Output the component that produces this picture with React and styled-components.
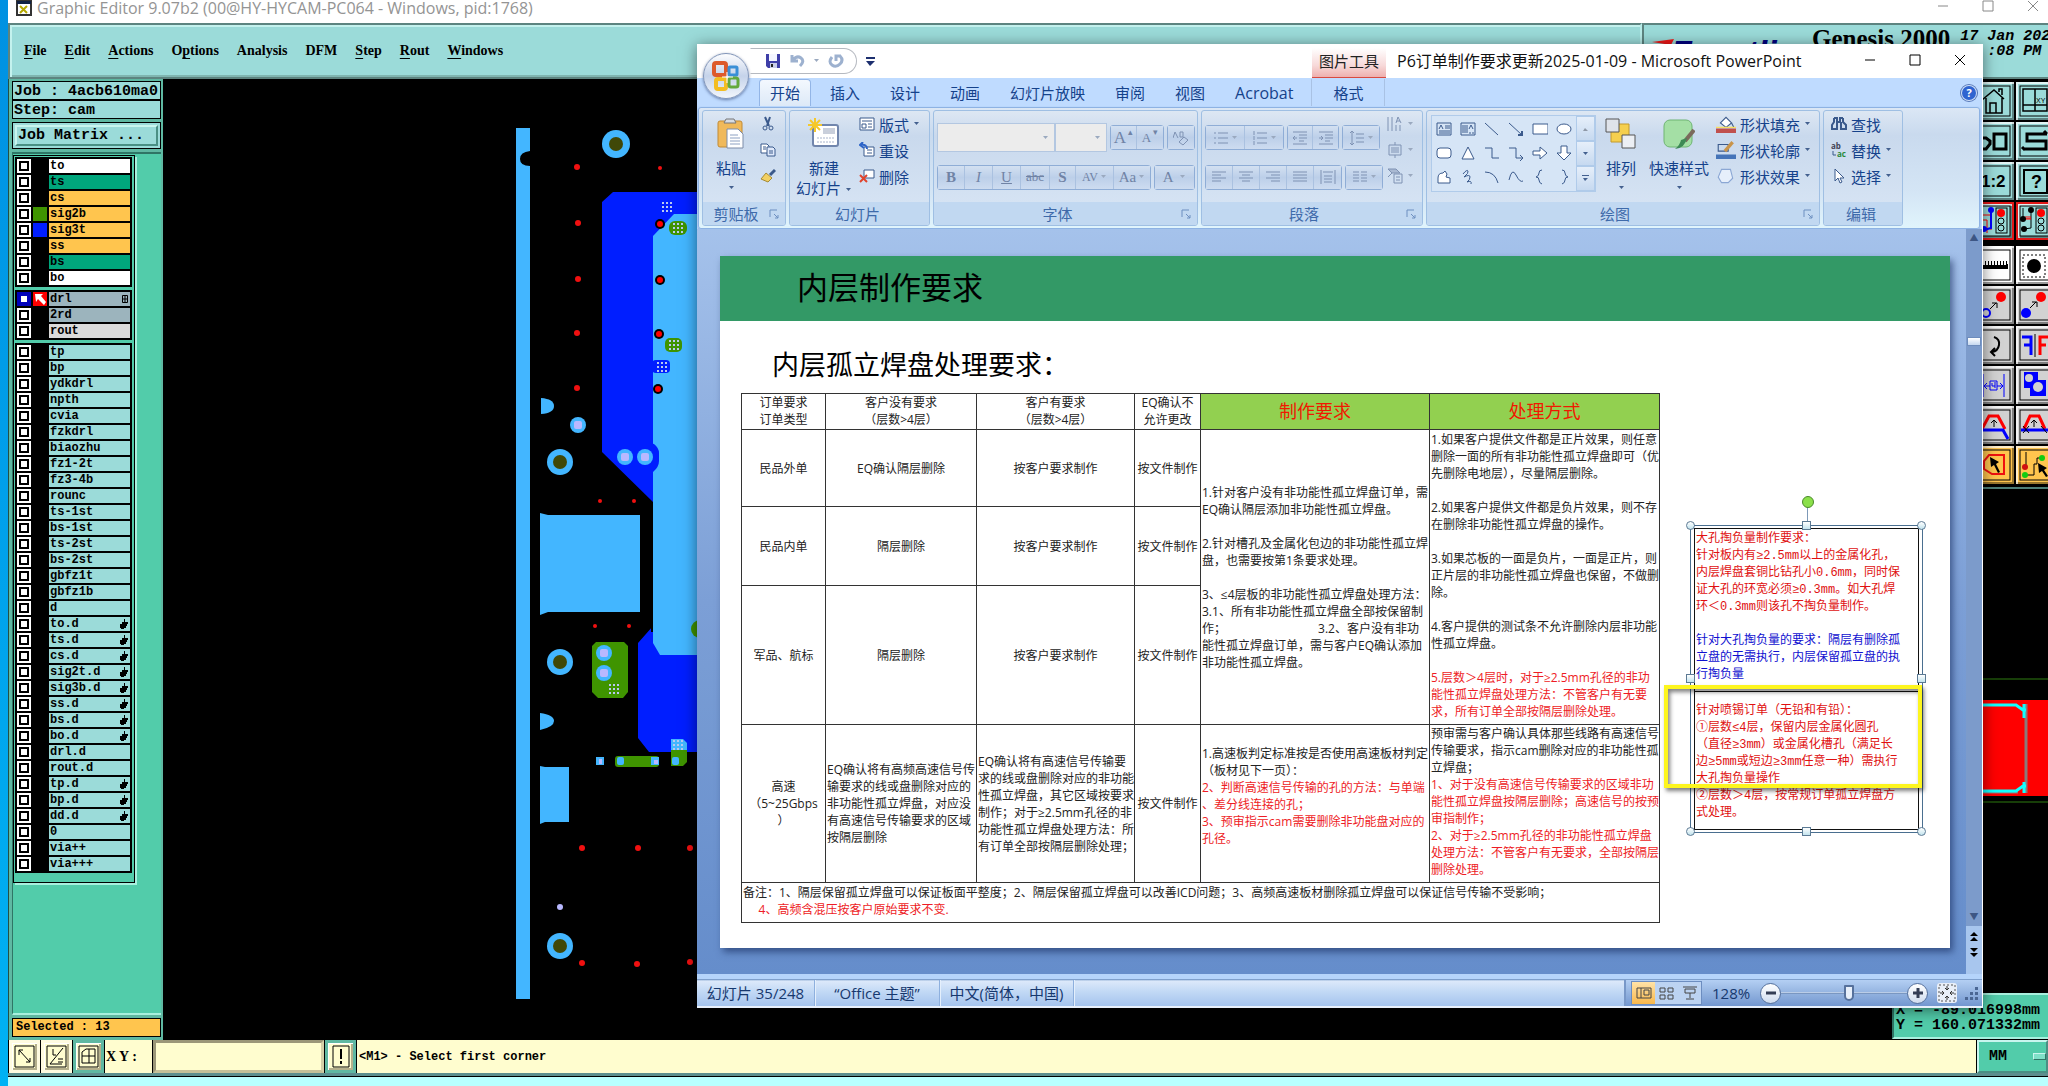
import React from 'react';
import styled, { createGlobalStyle, css } from 'styled-components';

const aqua = '#9bdbd9';
const mint = '#52ccaa';
const amber = '#ffc54e';
const cream = '#fffdcf';
const navy = '#15428b';
const copper = '#43b6ff';
const sigBlue = '#001eff';
const sigGreen = '#3f9400';

const menus = [
  ['', 'F', 'ile'],
  ['', 'E', 'dit'],
  ['', 'A', 'ctions'],
  ['O', 'p', 'tions'],
  ['Analysis', '', ''],
  ['DFM', '', ''],
  ['', 'S', 'tep'],
  ['', 'R', 'out'],
  ['', 'W', 'indows']
];

const layerGroups = [
  [
    { name: 'to', color: '#fff' },
    { name: 'ts', color: '#00a67c' },
    { name: 'cs', color: amber },
    { name: 'sig2b', color: amber, swatch: sigGreen },
    { name: 'sig3t', color: amber, swatch: sigBlue },
    { name: 'ss', color: amber },
    { name: 'bs', color: '#00a67c' },
    { name: 'bo', color: '#fff' }
  ],
  [
    { name: 'drl', color: '#9cb4bd', swatch: '#f00', active: true },
    { name: '2rd', color: '#9cb4bd' },
    { name: 'rout', color: '#dadada' }
  ],
  [
    'tp', 'bp', 'ydkdrl', 'npth', 'cvia', 'fzkdrl', 'biaozhu', 'fz1-2t', 'fz3-4b',
    'rounc', 'ts-1st', 'bs-1st', 'ts-2st', 'bs-2st', 'gbfz1t', 'gbfz1b', 'd',
    'to.d*', 'ts.d*', 'cs.d*', 'sig2t.d*', 'sig3b.d*', 'ss.d*', 'bs.d*', 'bo.d*',
    'drl.d', 'rout.d', 'tp.d*', 'bp.d*', 'dd.d*', '0', 'via++', 'via+++'
  ].map((n) => ({ name: n.replace('*', ''), color: aqua, hand: n.endsWith('*') }))
];

const HandIcon = () => (
  <svg width="8" height="10" viewBox="0 0 8 10">
    <path d="M4 0h1v3h3v2H7v2H6v2H4v1H1V9H0V5h2V3h2z" fill="#000" />
  </svg>
);

const Layer = ({ layer }) => (
  <LayerRow>
    <input type="checkbox" defaultChecked={layer.active} />
    <Swatch $color={layer.swatch}>
      {layer.active && (
        <svg width="14" height="14" viewBox="0 0 14 14">
          <path d="M2 2h8L8 4l5 6-2 3-6-6-2 3z" fill="#fff" />
        </svg>
      )}
    </Swatch>
    <LayerName $color={layer.color}>
      <span>{layer.name}</span>
      {layer.hand && <HandIcon />}
      {layer.active && (
        <svg width="6" height="8" viewBox="0 0 6 8">
          <path d="M.5.5h5v7h-5zM3 0v8M0 4h6" fill="none" stroke="#000" />
        </svg>
      )}
    </LayerName>
  </LayerRow>
);

const Pad = ({ x, y, r = 13 }) => (
  <>
    <circle cx={x} cy={y} r={r} fill={copper} />
    <circle cx={x} cy={y} r="7" fill="#404808" />
  </>
);

const Via = ({ x, y }) => (
  <>
    <circle cx={x} cy={y} r="8" fill={copper} />
    <rect x={x - 4} y={y - 4} width="8" height="8" rx="2" fill="#b8b8ff" />
  </>
);

const Dots = ({ x, y }) => (
  <path
    d={`M${x} ${y}h10M${x} ${y + 4}h10M${x} ${y + 8}h10`}
    stroke="#b9c9f0"
    strokeWidth="2"
    strokeDasharray="2 2"
  />
);

const redDots = [
  [577, 167, 3], [660, 168, 2], [578, 223, 3], [578, 279, 3], [577, 333, 3],
  [577, 388, 3], [600, 501, 2], [634, 501, 2], [595, 626, 2], [629, 626, 2],
  [582, 848, 3], [638, 848, 3], [690, 848, 3], [582, 963, 3], [637, 964, 3], [690, 962, 3]
];

const Board = () => (
  <BoardArt width="540" height="960" viewBox="163 79 540 960">
    <path d={'M516 128h14v23q-10 1-10 8t10 7v833h-14z'} fill={copper} />
    <path d="M602 202l11-10h90v560H649l-11-14v-95l15-17V502L602 452z" fill={sigBlue} />
    <path d="M653 502v130h-2V502z" />
    <path d="M653 236l21-22h29v441h-43l-7-12z" fill={copper} />
    <path d="M650 443l4 1q5 4 5 9v8q0 6-6 11h-3z" fill={sigBlue} />
    <Dots x={662} y={203} />
    <rect x="669" y="221" width="18" height="14" rx="6" fill={sigGreen} />
    <Dots x={673} y={224} />
    <rect x="665" y="338" width="17" height="14" rx="5" fill={sigGreen} />
    <Dots x={669} y={341} />
    <rect x="652" y="360" width="18" height="13" rx="4" fill={sigBlue} />
    <Dots x={657} y={363} />
    <circle cx="700" cy="629" r="9" fill={sigGreen} />
    {[[660, 224], [660, 280], [659, 334], [658, 389]].map(([x, y]) => (
      <g key={y}>
        <circle cx={x} cy={y} r="5" fill="#000" />
        <circle cx={x} cy={y} r="3" fill="#f00" />
      </g>
    ))}
    {redDots.map(([x, y, r]) => (
      <circle key={`${x}-${y}`} cx={x} cy={y} r={r} fill="#f01010" />
    ))}
    <Pad x={616} y={144} r={14} />
    <Pad x={560} y={462} />
    <Pad x={560} y={662} />
    <Pad x={560} y={946} />
    <path d="M541 398q13 1 13 8t-13 8z" fill={copper} />
    <path d="M540 713q14 2 14 8t-14 9z" fill={copper} />
    <Via x={578} y={425} />
    <Via x={625} y={457} />
    <Via x={645} y={457} />
    <path d="M540 513l8 2h92v97h-92l-8 3z" fill={copper} />
    <path d="M596 642h28l4 4v46l-5 6h-25l-6-6v-46z" fill={sigGreen} />
    <Via x={604} y={653} />
    <Via x={604} y={673} />
    <Dots x={609} y={685} />
    <rect x="596" y="757" width="8" height="8" fill={copper} />
    <rect x="599" y="759" width="3" height="5" fill="#b8b8ff" />
    <rect x="615" y="756" width="44" height="11" rx="3" fill={sigGreen} />
    <rect x="617" y="757" width="7" height="8" rx="2" fill={copper} />
    <rect x="651" y="757" width="8" height="8" fill={copper} />
    <rect x="654" y="760" width="4" height="4" fill="#b8b8ff" />
    <path d="M671 748h16v14l-4 4h-12z" fill={sigGreen} />
    <path d="M671 750v-11h12l4 4v7z" fill={copper} />
    <Dots x={673} y={741} />
    <rect x="672" y="757" width="7" height="8" rx="2" fill={copper} />
    <path d="M540 766l5 1h24v55h-24l-5 2z" fill={copper} />
    <circle cx="560" cy="907" r="3" fill="#b8b8ff" />
  </BoardArt>
);

const LightPost = () => (
  <>
    <rect x="20" y="6" width="11" height="25" fill="none" stroke="#000" />
    <circle cx="25" cy="11" r="4" fill="#f00" />
    <circle cx="25" cy="19" r="3" fill="none" stroke="#000" />
    <circle cx="25" cy="26" r="3" fill="none" stroke="#000" />
  </>
);

const tools = [
  { name: 'home', art: <path d="M6 18L18 8l10 9M10 16v15h16V16M14 31V21h6v10M23 10V7h3v6" fill="none" stroke="#000" strokeWidth="1.5" /> },
  {
    name: 'views',
    art: (
      <>
        <path d="M7 7h24v22H7zM19 7v22M7 23h24" fill="none" stroke="#000" strokeWidth="1.5" />
        <text x="20" y="21" fontSize="7" fontFamily="Liberation Sans">XY</text>
      </>
    )
  },
  { name: 'copy', art: <path d="M18 12h12v15H18zM4 12v15h6l4-5v-3l-4-3H4" fill="none" stroke="#000" strokeWidth="3" /> },
  { name: 'snake', art: <path d="M31 12H11v7h19v8H8M28 9l3 3M6 25l3 3" fill="none" stroke="#000" strokeWidth="3" /> },
  { name: 'ratio', art: <text x="5" y="25" fontSize="17" fontWeight="700" fontFamily="Liberation Sans">1:2</text> },
  {
    name: 'help',
    art: (
      <>
        <rect x="8" y="8" width="23" height="23" fill="none" stroke="#000" strokeWidth="2" />
        <text x="15" y="26" fontSize="18" fontWeight="700" fontFamily="Liberation Sans">?</text>
      </>
    )
  },
  {
    name: 'drc-left', hot: true,
    art: (
      <>
        <path d="M6 13h9v15M6 18h5v13" fill="none" stroke="#f00" />
        <path d="M15 8v18l-7 2" fill="none" stroke="#00f" strokeWidth="2" />
        <circle cx="15" cy="8" r="3" fill="#00f" />
        <circle cx="8" cy="27" r="3" fill="#00f" />
        <LightPost />
      </>
    )
  },
  {
    name: 'drc-right', hot: true,
    art: (
      <>
        <path d="M7 6v10M15 8v18l-7 1" fill="none" stroke="#000" />
        <path d="M9 17h6M10 14v3M12 14v3M14 14v3" stroke="#f00" />
        <circle cx="15" cy="8" r="3" />
        <circle cx="7" cy="17" r="3" />
        <circle cx="8" cy="27" r="3" />
        <LightPost />
      </>
    )
  },
  { name: 'ruler', tone: '#fff', art: <path d="M5 23h27v-5h-1v-3h-1v4h-2v-4h-1v4h-2v-4h-1v4h-2v-4h-1v4h-2v-4h-1v4h-2v-4h-1v4h-2v-4h-1v4h-2v-4h-1v4H5z" /> },
  {
    name: 'spot', tone: '#fff',
    art: (
      <>
        <rect x="7" y="9" width="22" height="22" fill="none" stroke="#000" strokeDasharray="2 2" />
        <circle cx="18" cy="20" r="7" />
      </>
    )
  },
  {
    name: 'move-ring', tone: '#d2d2d2',
    art: (
      <>
        <circle cx="10" cy="27" r="4" fill="none" stroke="#00f" strokeWidth="2" />
        <circle cx="25" cy="11" r="5" fill="#f00" />
        <path d="M14 23l6-6M16 17h5v5" fill="none" stroke="#000" />
      </>
    )
  },
  {
    name: 'move-dot', tone: '#d2d2d2',
    art: (
      <>
        <circle cx="10" cy="27" r="5" fill="#00f" />
        <circle cx="25" cy="11" r="5" fill="#f00" />
        <path d="M14 22l6-6M16 16h5v5" fill="none" stroke="#000" />
      </>
    )
  },
  { name: 'rotate', tone: '#d2d2d2', art: <path d="M18 11q6 2 5 8t-7 7M19 22l-4 4 4 4" fill="none" stroke="#000" strokeWidth="2" /> },
  {
    name: 'mirror', tone: '#d2d2d2',
    art: (
      <>
        <path d="M6 11h9v18M8 19h7" fill="none" stroke="#00f" strokeWidth="3" />
        <path d="M19 8v23" stroke="#000" />
        <path d="M32 11h-8v18M24 19h6" fill="none" stroke="#f00" strokeWidth="3" />
      </>
    )
  },
  { name: 'stretch', tone: '#d2d2d2', art: <path d="M7 8v23M28 8v23M8 20h6M21 20h6M11 17l-3 3 3 3M24 17l3 3-3 3M14 15h7v9h-7zM16 17v3h3M19 16v6" fill="none" stroke="#00f" /> },
  {
    name: 'merge', tone: '#d2d2d2',
    art: (
      <>
        <path d="M8 6h14v8h8v16H14v-8H8z" fill="#00f" />
        <circle cx="13" cy="12" r="4" fill="#d2d2d2" />
        <circle cx="22" cy="21" r="5" fill="#d2d2d2" />
      </>
    )
  },
  {
    name: 'arc-cut', tone: '#d2d2d2',
    art: (
      <>
        <path d="M6 23l7-13h9l7 13" fill="none" stroke="#f00" strokeWidth="3" />
        <path d="M4 24h23l5 9" fill="none" stroke="#00f" strokeWidth="3" />
        <path d="M18 21v-7M15 17l3-3 3 3" fill="none" stroke="#000" />
      </>
    )
  },
  {
    name: 'arc-break', tone: '#d2d2d2',
    art: (
      <>
        <path d="M8 23l6-13h9l6 13" fill="none" stroke="#f00" strokeWidth="3" />
        <path d="M5 24h29" stroke="#00f" strokeWidth="3" />
        <path d="M18 21v-7M15 17l3-3 3 3M7 20l6 7M13 20l-6 7M25 20l6 7" fill="none" stroke="#000" />
      </>
    )
  },
  {
    name: 'pick-area', tone: amber,
    art: (
      <>
        <path d="M13 9h15v19h-12l-8-5v-8z" fill="none" stroke="#f01010" strokeWidth="2" />
        <path d="M14 11l9 5-3 2 4 8-2 1-4-8-3 2z" />
      </>
    )
  },
  {
    name: 'pick-net', tone: amber,
    art: (
      <>
        <path d="M10 6v15M9 29h9V18h3v-6h5" fill="none" stroke="#000" />
        <circle cx="9" cy="21" r="3" fill="#d01010" />
        <circle cx="9" cy="29" r="3" fill="#1c1" />
        <circle cx="26" cy="12" r="3" fill="#1c1" />
        <path d="M22 17l9 5-3 2 4 6-2 1-4-6-3 2z" />
      </>
    )
  }
];

const Overview = () => (
  <BoardArt width="72" height="470" viewBox="1976 489 72 470">
    <path d="M1976 679h72M1976 802h72" stroke="#2f7d10" />
    <rect x="1976" y="700" width="72" height="96" fill="#f00" />
    <path d="M2026 704v89M1976 792h42" stroke="#8a7a7a" strokeWidth="3" />
    <path d="M1976 705h40l7 5h3M1976 791h40l7-5h3M2024 704v14M2024 782v11" stroke="#1ff" strokeWidth="3" fill="none" />
  </BoardArt>
);

const Caret = ({ dim }) => (
  <svg width="7" height="4" viewBox="0 0 7 4">
    <path d="M1 0h5L3.500 3z" fill={dim ? '#9aa9bf' : '#43608f'} />
  </svg>
);

const Doc = ({ size = 16, children, dim }) => (
  <svg width={size} height={size} viewBox="0 0 16 16" fill="none" stroke={dim ? '#7f92b3' : '#3b5a8c'}>
    {children}
  </svg>
);

const smallClipboard = [
  ['剪切', <><path d="M5 1l4 9M10 1L7 10" strokeWidth="2" /><circle cx="5" cy="12" r="2" /><circle cx="11" cy="12" r="2" /></>],
  ['复制', <><path d="M1 2h6l2 2v7H1z" fill="#fff" /><path d="M7 5h6l2 2v7H7z" fill="#dfe9fb" /><path d="M9 9h4M9 11h4M3 5h3M3 7h3" /></>],
  ['格式刷', <><path d="M15 2l-5 5" strokeWidth="3" /><path d="M6 5l6 5-4 4-7-3z" fill="#f2d063" stroke="#a58a35" /></>]
];

const slideActions = [
  ['版式', true, <><path d="M1 2h14v12H1z" fill="#fff" /><path d="M3 5h10M3 8h4v4H3zM9 8h4M9 11h4" /></>],
  ['重设', false, <><path d="M5 5h10v9H5z" fill="#fff" /><path d="M8 8h5M8 11h5" /><path d="M8 7Q8 2 2 3M4 0L1 3l4 3" stroke="#2d64c8" strokeWidth="2" /></>],
  ['删除', false, <><path d="M5 2h10v8H5z" fill="#fff" /><path d="M1 7l7 7M8 7l-7 7" stroke="#e0442c" strokeWidth="2" /></>]
];

const gallery = [
  <><path d="M1 2h14v12H1z" /><path d="M9 5h5M9 7h5M3 10h11M3 12h11" /><path d="M3 8l2-4 2 4" /></>,
  <><path d="M1 2h14v12H1z" /><path d="M3 4v8M5 4v8M7 4v8M10 11v2M13 11v2M9 8l2-4 2 4" /></>,
  <path d="M1 2l13 12" />,
  <><path d="M1 2l13 12" /><path d="M14 10v4h-4" strokeWidth="2" /></>,
  <path d="M1 3h15v10H1z" fill="#fff" />,
  <ellipse cx="8" cy="8" rx="7" ry="5" fill="#fff" />,
  <rect x="1" y="3" width="14" height="10" rx="3" fill="#fff" />,
  <path d="M8 2l6 12H2z" fill="#fff" />,
  <path d="M1 3h7v10h7" />,
  <path d="M1 3h7v10h7M12 10l3 3-3 3" />,
  <path d="M1 6h7V2l7 6-7 6v-4H1z" fill="#fff" />,
  <path d="M5 1h6v7h4l-7 7-7-7h4z" fill="#fff" />,
  <path d="M2 9q0-5 5-5l2-2 2 3-1 3 4 1v5H2z" fill="#fff" />,
  <path d="M3 5q4-5 5-3t-4 6q6-3 6 0t-3 5q5-2 4 2" />,
  <path d="M1 3q10 0 13 11" />,
  <path d="M1 11Q4-2 8 6t7 6" />,
  <path d="M10 1Q7 1 7 4t-3 4q3 0 3 3t3 4" />,
  <path d="M6 1q3 0 3 3t3 4q-3 0-3 3t-3 4" />
];

const shapeActions = [
  ['形状填充', <><path d="M4 7l5-5 5 5-5 4z" fill="#fff" /><path d="M14 7l2 4" /><path d="M0 14h18" stroke="#c0504d" strokeWidth="4" /><path d="M0 11h18" stroke="#f7e064" /></>],
  ['形状轮廓', <><path d="M2 3h9v6H2z" /><path d="M15 1L8 9" stroke="#c9944a" strokeWidth="3" /><path d="M0 14h18" stroke="#4574b8" strokeWidth="4" /></>],
  ['形状效果', <path d="M5 2h8l2 8-4 4H5l-3-5z" fill="#e6effb" stroke="#8ba7d4" />]
];

const editActions = [
  ['查找', false, <path d="M3 2v4L1 9v4h5V6M12 2v4l3 3v4h-5V6M6 6h4M3 2h3v4M12 2H9v4" strokeWidth="2" />],
  ['替换', true, <><text x="0" y="7" fontSize="8" fontWeight="700" fill="#445" stroke="none">ab</text><text x="6" y="15" fontSize="8" fontWeight="700" fill="#2a8a3c" stroke="none">ac</text><path d="M2 9v4h3" /></>],
  ['选择', true, <path d="M4 1v12l3-3 2 5 2-1-2-4h4z" fill="#fff" />]
];

const alignLines = [
  'M1 3h14M1 6h9M1 9h14M1 12h9',
  'M1 3h14M4 6h8M1 9h14M4 12h8',
  'M1 3h14M6 6h9M1 9h14M6 12h9',
  'M1 3h14M1 6h14M1 9h14M1 12h14',
  'M1 1v14M15 1v14M3 3h10M4 7h8M4 10h8M4 13h8'
];

const Launcher = () => (
  <LaunchButton aria-label="更多">
    <svg width="10" height="10" viewBox="0 0 10 10">
      <path d="M1 8V1h7M5 5l4 4M9 6v3H6" fill="none" stroke="#6d8fc0" />
    </svg>
  </LaunchButton>
);

const Group = ({ title, width, launcher, children }) => (
  <GroupBox $width={width}>
    <GroupBody>{children}</GroupBody>
    <GroupLabel>
      <span>{title}</span>
      {launcher && <Launcher />}
    </GroupLabel>
  </GroupBox>
);

const Ribbon = () => (
  <RibbonBar>
    <Group title="剪贴板" width={84} launcher>
      <BigButton $width={50}>
        <svg width="30" height="32" viewBox="0 0 30 32">
          <rect x="2" y="3" width="24" height="26" rx="2" fill="#f0b95a" stroke="#c18a35" />
          <path d="M8 5h12l-2-4h-8z" fill="#d7dce4" stroke="#777" />
          <path d="M11 11h11l5 5v14H11z" fill="#fff" stroke="#7d8ca8" />
          <path d="M14 17h8M14 20h10M14 23h10M14 26h10" stroke="#8da1c2" />
        </svg>
        <span>粘贴</span>
        <Caret />
      </BigButton>
      <Stack>
        {smallClipboard.map(([name, art]) => (
          <SmallButton key={name} aria-label={name}>
            <Doc>{art}</Doc>
          </SmallButton>
        ))}
      </Stack>
    </Group>
    <Group title="幻灯片" width={141}>
      <BigButton $width={62}>
        <svg width="32" height="32" viewBox="0 0 32 32">
          <rect x="5" y="7" width="25" height="21" rx="2" fill="#fff" stroke="#7186ad" strokeWidth="2" />
          <path d="M15 10h12v6H15z" fill="#c9cfdb" />
          <path d="M9 20h18M9 24h18" stroke="#a8b4cc" strokeDasharray="2 1" />
          <path d="M7 0v14M0 7h14M2 2l10 10M12 2L2 12" stroke="#f5c82a" strokeWidth="2" />
        </svg>
        <span>新建</span>
        <span>幻灯片 <Caret /></span>
      </BigButton>
      <Stack>
        {slideActions.map(([name, caret, art]) => (
          <SmallButton key={name}>
            <Doc>{art}</Doc>
            {name}
            {caret && <Caret />}
          </SmallButton>
        ))}
      </Stack>
    </Group>
    <Group title="字体" width={265} launcher>
      <Rows>
        <ToolRow $height={29}>
          <Combos>
            <Combo $width={118}><select disabled aria-label="字体" /><Caret dim /></Combo>
            <Combo $width={52}><select disabled aria-label="字号" /><Caret dim /></Combo>
          </Combos>
          <ButtonSet>
            <FontButton $width={26} $size={17}>A<sup>▴</sup></FontButton>
            <FontButton $width={26} $size={13}>A<sup>▾</sup></FontButton>
          </ButtonSet>
          <ButtonSet>
            <FontButton $width={26} aria-label="清除格式">
              <Doc dim><path d="M0 8l2-6 3 6M7 2h3v5H7zM6 12l5-5 4 3-5 5z" /></Doc>
            </FontButton>
          </ButtonSet>
        </ToolRow>
        <ToolRow $height={26}>
          <ButtonSet>
            <FontButton $width={27}><b>B</b></FontButton>
            <FontButton $width={28}><i>I</i></FontButton>
            <FontButton $width={28}><u>U</u></FontButton>
            <FontButton $width={29} $size={13}><s>abc</s></FontButton>
            <FontButton $width={26}><b>S</b></FontButton>
            <FontButton $width={38} $size={12}>AV <Caret dim /></FontButton>
            <FontButton $width={36}>Aa <Caret dim /></FontButton>
          </ButtonSet>
          <ButtonSet>
            <FontButton $width={39}>A&nbsp; <Caret dim /></FontButton>
          </ButtonSet>
        </ToolRow>
      </Rows>
    </Group>
    <Group title="段落" width={222} launcher>
      <Rows>
        <ToolRow $height={29}>
          <ButtonSet>
            <FontButton $width={39} aria-label="项目符号"><Doc dim><path d="M5 3h10M5 8h10M5 13h10M1 3h2M1 8h2M1 13h2" /></Doc><Caret dim /></FontButton>
            <FontButton $width={38} aria-label="编号"><Doc dim><path d="M5 3h10M5 8h10M5 13h10M2 1v4M2 6v4M2 11v4" /></Doc><Caret dim /></FontButton>
          </ButtonSet>
          <ButtonSet>
            <FontButton $width={25} aria-label="减少缩进"><Doc dim><path d="M1 2h14M7 5h8M7 8h8M7 11h5M1 14h14M5 8H1M3 6L1 8l2 2" /></Doc></FontButton>
            <FontButton $width={25} aria-label="增加缩进"><Doc dim><path d="M1 2h14M7 5h8M7 8h8M7 11h5M1 14h14M1 8h4M3 6l2 2-2 2" /></Doc></FontButton>
          </ButtonSet>
          <ButtonSet>
            <FontButton $width={36} aria-label="行距"><Doc dim><path d="M7 4h8M7 8h8M7 12h8M3 1v14M1 3l2-2 2 2M1 13l2 2 2-2" /></Doc><Caret dim /></FontButton>
          </ButtonSet>
        </ToolRow>
        <ToolRow $height={26}>
          <ButtonSet>
            {alignLines.map((d) => (
              <FontButton key={d} $width={27} aria-label="对齐"><Doc dim><path d={d} /></Doc></FontButton>
            ))}
          </ButtonSet>
          <ButtonSet>
            <FontButton $width={36} aria-label="分栏"><Doc dim><path d="M1 3h6M1 6h6M1 9h6M1 12h6M9 3h6M9 6h6M9 9h6M9 12h6" /></Doc><Caret dim /></FontButton>
          </ButtonSet>
        </ToolRow>
      </Rows>
      <Stack>
        <SmallButton aria-label="文字方向"><Doc dim><path d="M1 1v14M5 1v14M9 9v6M13 9v6M9 7l2-6 3 6M10 5h3" /></Doc><Caret dim /></SmallButton>
        <SmallButton aria-label="对齐文本"><Doc dim><path d="M2 3h12v10H2zM4 6h8M4 8h8M4 10h8M8 0v3M8 13v3" /></Doc><Caret dim /></SmallButton>
        <SmallButton aria-label="转换为 SmartArt"><Doc dim><path d="M1 1h8l4 4H5zM1 9l4-4" fill="#a9b9d2" /><path d="M7 6h8v9H7zM9 9h4M9 12h4" /></Doc><Caret dim /></SmallButton>
      </Stack>
    </Group>
    <Group title="绘图" width={394} launcher>
      <Gallery>
        <Shapes>
          {gallery.map((art, i) => (
            <ShapeButton key={i} aria-label={`形状 ${i + 1}`}><Doc>{art}</Doc></ShapeButton>
          ))}
        </Shapes>
        <GalleryScroll>
          <button aria-label="上一行"><svg width="7" height="4" viewBox="0 0 7 4"><path d="M1 4h5L3 1z" fill="#8f99a8" /></svg></button>
          <button aria-label="下一行"><Caret /></button>
          <button aria-label="其他"><svg width="7" height="7" viewBox="0 0 7 7"><path d="M0 0h7v1H0zM1 3h5L3 6z" fill="#43608f" /></svg></button>
        </GalleryScroll>
      </Gallery>
      <BigButton $width={50}>
        <svg width="32" height="32" viewBox="0 0 32 32">
          <path d="M6 6h18v18H6z" fill="#f5cf4e" stroke="#c39a2c" />
          <path d="M1 1h13v13H1z" fill="#dfe3ea" stroke="#555" />
          <path d="M17 17h13v13H17z" fill="#eceff4" stroke="#555" />
        </svg>
        <span>排列</span>
        <Caret />
      </BigButton>
      <BigButton $width={66}>
        <svg width="32" height="32" viewBox="0 0 32 32">
          <rect x="1" y="2" width="28" height="27" rx="6" fill="#a4dfa5" stroke="#6fb573" />
          <path d="M31 12l-9 11" stroke="#7b6a5c" strokeWidth="4" />
          <path d="M24 20q-2 10-12 11 5-4 6-9z" fill="#3d8a55" />
        </svg>
        <span>快速样式</span>
        <Caret />
      </BigButton>
      <Stack>
        {shapeActions.map(([name, art]) => (
          <SmallButton key={name}>
            <svg width="20" height="18" viewBox="0 0 18 16" fill="none" stroke="#3b5a8c">{art}</svg>
            {name}
            <Caret />
          </SmallButton>
        ))}
      </Stack>
    </Group>
    <Group title="编辑" width={80}>
      <Stack>
        {editActions.map(([name, caret, art]) => (
          <SmallButton key={name}>
            <Doc>{art}</Doc>
            {name}
            {caret && <Caret />}
          </SmallButton>
        ))}
      </Stack>
    </Group>
  </RibbonBar>
);

const RequirementTable = () => (
  <Sheet>
    <colgroup>
      {[84, 151, 158, 66, 229, 230].map((w, i) => <col key={i} width={w} />)}
    </colgroup>
    <thead>
      <Line $height={36}>
        <th>{'订单要求\n订单类型'}</th>
        <th>{'客户没有要求\n（层数>4层）'}</th>
        <th>{'客户有要求\n（层数>4层）'}</th>
        <th>{'EQ确认不\n允许更改'}</th>
        <HeadCell>制作要求</HeadCell>
        <HeadCell>处理方式</HeadCell>
      </Line>
    </thead>
    <tbody>
      <Line $height={77}>
        <td>民品外单</td>
        <td>EQ确认隔层删除</td>
        <td>按客户要求制作</td>
        <td>按文件制作</td>
        <TextCell rowSpan={3}>
          {'1.针对客户没有非功能性孤立焊盘订单，需\nEQ确认隔层添加非功能性孤立焊盘。\n\n2.针对槽孔及金属化包边的非功能性孤立焊\n盘，也需要按第1条要求处理。\n\n3、≤4层板的非功能性孤立焊盘处理方法：\n3.1、所有非功能性孤立焊盘全部按保留制\n作；'}
          <Blank />
          {'3.2、客户没有非功\n能性孤立焊盘订单，需与客户EQ确认添加\n非功能性孤立焊盘。'}
        </TextCell>
        <TextCell rowSpan={3} $raised>
          {'1.如果客户提供文件都是正片效果，则任意\n删除一面的所有非功能性孤立焊盘即可（优\n先删除电地层），尽量隔层删除。\n\n2.如果客户提供文件都是负片效果，则不存\n在删除非功能性孤立焊盘的操作。\n\n3.如果芯板的一面是负片，一面是正片，则\n正片层的非功能性孤立焊盘也保留，不做删\n除。\n\n4.客户提供的测试条不允许删除内层非功能\n性孤立焊盘。\n\n'}
          <Red>{'5.层数＞4层时，对于≥2.5mm孔径的非功\n能性孤立焊盘处理方法：不管客户有无要\n求，所有订单全部按隔层删除处理。'}</Red>
        </TextCell>
      </Line>
      <Line $height={79}>
        <td>民品内单</td>
        <td>隔层删除</td>
        <td>按客户要求制作</td>
        <td>按文件制作</td>
      </Line>
      <Line $height={139}>
        <td>军品、航标</td>
        <td>隔层删除</td>
        <td>按客户要求制作</td>
        <td>按文件制作</td>
      </Line>
      <Line $height={158}>
        <td>{'高速\n（5~25Gbps\n）'}</td>
        <TextCell>{'EQ确认将有高频高速信号传\n输要求的线或盘删除对应的\n非功能性孤立焊盘，对应没\n有高速信号传输要求的区域\n按隔层删除'}</TextCell>
        <TextCell>{'EQ确认将有高速信号传输要\n求的线或盘删除对应的非功能\n性孤立焊盘，其它区域按要求\n制作；对于≥2.5mm孔径的非\n功能性孤立焊盘处理方法：所\n有订单全部按隔层删除处理；'}</TextCell>
        <td>按文件制作</td>
        <TextCell $shifted>
          {'1.高速板判定标准按是否使用高速板材判定\n（板材见下一页）：\n'}
          <Red>{'2、判断高速信号传输的孔的方法：与单端\n、差分线连接的孔；\n3、预审指示cam需要删除非功能盘对应的\n孔径。'}</Red>
        </TextCell>
        <TextCell $raised>
          {'预审需与客户确认具体那些线路有高速信号\n传输要求，指示cam删除对应的非功能性孤\n立焊盘；\n'}
          <Red>{'1、对于没有高速信号传输要求的区域非功\n能性孤立焊盘按隔层删除；高速信号的按预\n审指制作；\n2、对于≥2.5mm孔径的非功能性孤立焊盘\n处理方法：不管客户有无要求，全部按隔层\n删除处理。'}</Red>
        </TextCell>
      </Line>
      <Line $height={40}>
        <TextCell colSpan={6} $raised>
          {'备注：1、隔层保留孤立焊盘可以保证板面平整度；2、隔层保留孤立焊盘可以改善ICD问题；3、高频高速板材删除孤立焊盘可以保证信号传输不受影响；\n'}
          <Red>{'     4、高频含混压按客户原始要求不变.'}</Red>
        </TextCell>
      </Line>
    </tbody>
  </Sheet>
);

const handles = [
  ['0%', '0%', true], ['50%', '0%'], ['100%', '0%', true], ['0%', '50%'],
  ['100%', '50%'], ['0%', '100%', true], ['50%', '100%'], ['100%', '100%', true]
];

const SideNote = () => (
  <NoteFrame>
    <RotateHandle />
    <Note>
      <NoteBlock $color="#e01010">{'大孔掏负量制作要求：\n针对板内有≥2.5mm以上的金属化孔，\n内层焊盘套铜比钻孔小0.6mm，同时保\n证大孔的环宽必须≥0.3mm。如大孔焊\n环＜0.3mm则该孔不掏负量制作。\n '}</NoteBlock>
      <NoteBlock $color="#1010d0">{'针对大孔掏负量的要求：隔层有删除孤\n立盘的无需执行，内层保留孤立盘的执\n行掏负量'}</NoteBlock>
      <NoteBlock $color="#e01010" $ruled>{'针对喷锡订单（无铅和有铅）：\n①层数≤4层，保留内层金属化圆孔\n（直径≥3mm）或金属化槽孔（满足长\n边≥5mm或短边≥3mm任意一种）需执行\n大孔掏负量操作\n②层数＞4层，按常规订单孤立焊盘方\n式处理。'}</NoteBlock>
    </Note>
    {handles.map(([x, y, round]) => (
      <Handle key={x + y} $x={x} $y={y} $round={round} />
    ))}
  </NoteFrame>
);

const PowerPoint = () => (
  <PptWindow>
    <PptTop>
      <OfficeButton aria-label="Office 按钮">
        <svg width="46" height="46" viewBox="0 0 46 46" fill="none" strokeWidth="4">
          <rect x="11" y="10" width="12" height="12" rx="2" stroke="#dd5a2b" />
          <rect x="26" y="14" width="8" height="8" rx="1" stroke="#3a8fd6" strokeWidth="3" />
          <rect x="13" y="26" width="10" height="10" rx="2" stroke="#f3bd22" />
          <rect x="26" y="25" width="9" height="9" rx="2" stroke="#64a93d" strokeWidth="3" />
          <path d="M19 24h11M24 19v11" stroke="#fff" strokeWidth="1" />
        </svg>
      </OfficeButton>
      <TopRight>
        <TitleRow>
          <QuickAccess>
            <button aria-label="保存">
              <svg width="16" height="16" viewBox="0 0 16 16">
                <path d="M1 1h14v14H3l-2-2z" fill="#3f3fa8" />
                <path d="M4 1h8v7H4z" fill="#f4f6ff" />
                <path d="M5 10h7v5H5z" fill="#c9cde8" />
                <path d="M6 11h2v3H6z" fill="#222" />
              </svg>
            </button>
            <button aria-label="撤消">
              <svg width="16" height="16" viewBox="0 0 16 16">
                <path d="M3 2v6h6M4 7q4-5 8-2t-1 8" fill="none" stroke="#9db1cf" strokeWidth="3" />
              </svg>
            </button>
            <Caret dim />
            <button aria-label="重复">
              <svg width="16" height="16" viewBox="0 0 16 16">
                <path d="M4 4q-4 5 0 8t8-1 0-8M8 8V3h5" fill="none" stroke="#9db1cf" strokeWidth="3" />
              </svg>
            </button>
          </QuickAccess>
          <svg width="9" height="11" viewBox="0 0 9 11">
            <path d="M0 1h9v2H0zM0 5h9L4 10z" fill="#1d2f6f" />
          </svg>
          <ContextTitle>图片工具</ContextTitle>
          <DocTitle>P6订单制作要求更新2025-01-09 - Microsoft PowerPoint</DocTitle>
          <WindowControls $color="#000" />
        </TitleRow>
        <TabRow>
          {['开始', '插入', '设计', '动画', '幻灯片放映', '审阅', '视图'].map((t, i) => (
            <Tab key={t} $active={i === 0}>{t}</Tab>
          ))}
          <Tab $latin>Acrobat</Tab>
          <ContextTab>格式</ContextTab>
          <HelpButton aria-label="帮助">?</HelpButton>
        </TabRow>
      </TopRight>
    </PptTop>
    <Ribbon />
    <Stage>
      <Slide>
        <SlideHeader>内层制作要求</SlideHeader>
        <SlideLead>内层孤立焊盘处理要求：</SlideLead>
        <RequirementTable />
        <SideNote />
        <Highlight />
      </Slide>
      <ScrollColumn>
        <ScrollTrack>
          <button aria-label="向上">▲</button>
          <ScrollThumb />
          <button aria-label="向下">▼</button>
        </ScrollTrack>
        <PageButton aria-label="上一张">
          <svg width="8" height="10" viewBox="0 0 8 10"><path d="M4 0l4 4H0zM4 5l4 4H0z" /></svg>
        </PageButton>
        <PageButton aria-label="下一张">
          <svg width="8" height="10" viewBox="0 0 8 10"><path d="M0 0h8L4 4zM0 5h8L4 9z" /></svg>
        </PageButton>
      </ScrollColumn>
    </Stage>
    <StatusBar>
      <StatusItem $width={118}>幻灯片 35/248</StatusItem>
      <StatusItem $width={125}>“Office 主题”</StatusItem>
      <StatusItem $width={134}>中文(简体，中国)</StatusItem>
      <StatusRight>
        <ViewSet>
          <ViewButton $active aria-label="普通视图">
            <Doc><path d="M1 3h14v10H1zM5 3v10M8 5h5v5H8z" stroke="#444" /></Doc>
          </ViewButton>
          <ViewButton aria-label="幻灯片浏览">
            <Doc><path d="M1 3h5v4H1zM9 3h5v4H9zM1 10h5v4H1zM9 10h5v4H9z" stroke="#444" /></Doc>
          </ViewButton>
          <ViewButton aria-label="幻灯片放映">
            <Doc><path d="M1 2h14M3 4h10v4H3zM8 8v5M4 14h8" stroke="#444" /></Doc>
          </ViewButton>
        </ViewSet>
        <ZoomText>128%</ZoomText>
        <RoundButton aria-label="缩小">
          <svg width="12" height="12" viewBox="0 0 12 12"><path d="M1 6h10" stroke="#333d55" strokeWidth="3" /></svg>
        </RoundButton>
        <ZoomRange type="range" min="0" max="100" defaultValue="54" aria-label="显示比例" />
        <RoundButton aria-label="放大">
          <svg width="12" height="12" viewBox="0 0 12 12"><path d="M1 6h10M6 1v10" stroke="#333d55" strokeWidth="3" /></svg>
        </RoundButton>
        <FitButton aria-label="适应窗口">
          <svg width="18" height="18" viewBox="0 0 18 18">
            <path d="M1 1h16v16H1z" fill="none" stroke="#555" strokeDasharray="2 2" />
            <path d="M9 2v4M9 12v4M2 9h4M12 9h4M7 4l2 2 2-2M7 14l2-2 2 2M4 7l2 2-2 2M14 7l-2 2 2 2" fill="none" stroke="#333" />
          </svg>
        </FitButton>
        <svg width="14" height="14" viewBox="0 0 14 14">
          <path d="M10 1h3v3h-3zM5 6h3v3H5zM10 6h3v3h-3zM0 11h3v3H0zM5 11h3v3H5zM10 11h3v3h-3z" fill="#4b6794" />
        </svg>
      </StatusRight>
    </StatusBar>
  </PptWindow>
);

const WindowControls = ({ $color, $bleed }) => (
  <Controls $color={$color} $bleed={$bleed}>
    <button aria-label="最小化"><svg width="12" height="12"><path d="M1 6h10" /></svg></button>
    <button aria-label="最大化"><svg width="12" height="12"><path d="M1 1h10v10H1z" /></svg></button>
    <button aria-label="关闭"><svg width="12" height="12"><path d="M1 1l10 10M11 1L1 11" /></svg></button>
  </Controls>
);

const App = () => (
  <Desktop>
    <GlobalStyle />
    <Editor>
      <EditorTitle>
        <svg width="16" height="16" viewBox="0 0 16 16">
          <path d="M1 1h14v14H1z" fill="#fff" stroke="#333" strokeWidth="2" />
          <path d="M1 1h14v3H1z" fill="#124" />
          <path d="M4 6l7 7M11 6l-7 7" stroke="#b5a800" strokeWidth="2" />
        </svg>
        <h1>Graphic Editor 9.07b2 (00@HY-HYCAM-PC064 - Windows, pid:1768)</h1>
        <WindowControls $color="#888" $bleed />
      </EditorTitle>
      <Header>
        <MenuBar>
          {menus.map(([a, key, b]) => (
            <button key={a + key + b}>{a}{key && <u>{key}</u>}{b}</button>
          ))}
        </MenuBar>
        <Brand>
          <svg width="158" height="50" viewBox="0 0 158 50">
            <path d="M8 17l22-3-3 6z" fill="#f01818" />
            <text x="27" y="39" fontSize="34" fontWeight="700" fontStyle="italic" fontFamily="Liberation Sans" fill="#000080">Frontline</text>
          </svg>
          <strong>Genesis 2000</strong>
          <Clock>{'17 Jan 2025\n   :08 PM'}</Clock>
        </Brand>
      </Header>
      <Workspace>
        <SidePanel>
          <JobBox>
            <div>Job : 4acb610ma0</div>
            <div>Step: cam</div>
          </JobBox>
          <MatrixWrap>
            <button>Job Matrix ...</button>
          </MatrixWrap>
          <LayerArea>
            <LayerList>
              {layerGroups.map((group, i) => (
                <LayerGroup key={i}>
                  {group.map((layer) => <Layer key={layer.name} layer={layer} />)}
                </LayerGroup>
              ))}
            </LayerList>
          </LayerArea>
          <Selected>Selected : 13</Selected>
        </SidePanel>
        <Canvas>
          <Board />
        </Canvas>
        <ToolColumn>
          <ToolGrid>
            {tools.map((t) => (
              <ToolButton key={t.name} $tone={t.tone} $hot={t.hot} aria-label={t.name}>
                <svg width="38" height="38" viewBox="0 0 38 38">
                  <rect x="4" y="4" width="30" height="30" fill="none" stroke="#000" />
                  {t.art}
                </svg>
              </ToolButton>
            ))}
          </ToolGrid>
          <Overview />
        </ToolColumn>
        <Coords>{'X = -89.016998mm\nY = 160.071332mm'}</Coords>
      </Workspace>
      <CommandBar>
        <CommandButton aria-label="缩放">
          <svg width="21" height="23" viewBox="0 0 21 23"><path d="M1 1h19v21H1zM5 5l11 12M5 10V5h4M12 17h4v-4" fill="none" stroke="#000" /></svg>
        </CommandButton>
        <CommandButton aria-label="角度">
          <svg width="21" height="23" viewBox="0 0 21 23"><path d="M1 1h19v21H1zM17 3L4 19M7 4v6h3M12 14h5M12 17h5M4 19h12" fill="none" stroke="#000" /></svg>
        </CommandButton>
        <CommandButton $mint aria-label="网格">
          <svg width="21" height="23" viewBox="0 0 21 23"><path d="M1 1h19v21H1zM4 7l4-3h9v14H4zM4 11h13M11 4v14" fill="none" stroke="#000" /></svg>
        </CommandButton>
        <XyLabel htmlFor="xy">X Y :</XyLabel>
        <XyInput id="xy" type="text" />
        <CommandButton $mint aria-label="提示">
          <svg width="18" height="23" viewBox="0 0 18 23"><path d="M1 1h16v21H1z" fill="none" stroke="#000" /><path d="M9 4v10M9 16v3" stroke="#000" strokeWidth="2" /></svg>
        </CommandButton>
        <Prompt>{'<M1> - Select first corner'}</Prompt>
        <Units>
          <select aria-label="单位" defaultValue="MM"><option>MM</option></select>
          <i />
        </Units>
      </CommandBar>
      <BottomStrip />
    </Editor>
    <PowerPoint />
  </Desktop>
);

export default App;

const GlobalStyle = createGlobalStyle`
  * { box-sizing: border-box; }
  body { margin: 0; overflow: hidden; }
  button, input, select { font: inherit; color: inherit; margin: 0; padding: 0; }
  button { background: none; border: none; }
`;

const mono = css`
  font-family: 'Liberation Mono', monospace;
  font-weight: 700;
`;

const raised = css`
  border: 2px solid;
  border-color: #c9f5ee #4a8f84 #4a8f84 #c9f5ee;
`;

const Desktop = styled.div`
  position: relative;
  min-height: 100vh;
  display: flex;
  padding-left: 8px;
  background: linear-gradient(#0091e2, #00b2f4);
  font-family: 'Open Sans', 'Noto Sans CJK SC', sans-serif;
  overflow: hidden;
`;

const Editor = styled.div`
  flex: 1;
  min-width: 0;
  display: flex;
  flex-direction: column;
  background: #000;
`;

const EditorTitle = styled.div`
  height: 23px;
  display: flex;
  align-items: flex-start;
  gap: 5px;
  padding-left: 8px;
  background: #fff;

  h1 {
    flex: 1;
    margin: 0;
    font-size: 16px;
    line-height: 16px;
    font-weight: 400;
    color: #949494;
  }
`;

const Controls = styled.div`
  display: flex;
  align-items: center;
  margin-right: ${({ $bleed }) => ($bleed ? '-7px' : '0')};

  button {
    width: 45px;
    height: 14px;
    display: flex;
    justify-content: center;
  }

  path {
    fill: none;
    stroke: ${({ $color }) => $color};
  }
`;

const Header = styled.div`
  height: 56px;
  display: flex;
  overflow: hidden;
`;

const MenuBar = styled.nav`
  flex: 1;
  display: flex;
  align-items: center;
  gap: 18px;
  padding: 0 14px;
  background: ${aqua};
  border: 2px solid #5d8480;
  border-right-color: #b8ece8;
  box-shadow: inset 2px 2px #c4f2ee, inset 0 -2px #7fb5b0;
  font-family: 'Liberation Serif', serif;
  font-weight: 700;
  font-size: 14px;

  u {
    text-underline-offset: 3px;
  }
`;

const Brand = styled.div`
  flex: 0 0 406px;
  min-width: 0;
  display: flex;
  align-items: flex-start;
  gap: 10px;
  background: ${aqua};
  border: 2px solid #5d8480;
  border-right: none;
  overflow: hidden;

  svg {
    flex: none;
  }

  strong {
    flex: 0 0 127px;
    font-family: 'Liberation Serif', serif;
    font-size: 25px;
    line-height: 28px;
    white-space: nowrap;
  }
`;

const Clock = styled.div`
  ${mono};
  font-style: italic;
  font-size: 15px;
  line-height: 15px;
  padding-top: 4px;
  white-space: pre;
`;

const Workspace = styled.div`
  position: relative;
  flex: 1;
  display: flex;
  overflow: hidden;
`;

const SidePanel = styled.aside`
  flex: 0 0 155px;
  display: flex;
  flex-direction: column;
  padding: 2px 2px 3px 3px;
  background: #5fb8a2;
  border-left: 1px solid #244f45;
`;

const JobBox = styled.div`
  ${mono};
  font-size: 15px;

  div {
    height: 19px;
    line-height: 17px;
    padding: 1px 0 0 1px;
    background: ${aqua};
    border: 1px solid #000;
    white-space: nowrap;
    overflow: hidden;
  }
`;

const MatrixWrap = styled.div`
  ${mono};
  margin: 3px 0;
  padding: 2px;
  background: ${aqua};
  border: 1px solid #000;
  font-size: 15px;

  button {
    ${raised};
    display: block;
    width: 100%;
    height: 21px;
    line-height: 17px;
    padding-left: 1px;
    background: ${aqua};
    text-align: left;
  }
`;

const LayerArea = styled.div`
  flex: 1;
  padding-top: 1px;
  background: ${mint};
  border-top: 2px solid #2f7565;
  border-bottom: 2px solid #a8f0de;
  border-left: 1px solid #2f7565;
  margin-bottom: 3px;
`;

const LayerList = styled.div`
  width: 122px;
  display: flex;
  flex-direction: column;
  gap: 3px;
  padding: 1px 2px 9px 1px;
  border: 1px solid #000;
  box-shadow: 2px 2px #a8f0de;
`;

const LayerGroup = styled.div`
  padding: 1px 2px;
  background: #000;
`;

const LayerRow = styled.label`
  height: 16px;
  display: flex;
  align-items: center;
  gap: 2px;

  input {
    appearance: none;
    width: 14px;
    height: 14px;
    border: 2px solid #fff;
    outline: 2px solid #000;
    outline-offset: -4px;
    background: #fff;
  }

  input:checked {
    border-color: #00b;
    outline-color: #00b;
  }
`;

const Swatch = styled.span`
  width: 14px;
  height: 14px;
  background: ${({ $color }) => $color || '#000'};

  svg {
    display: block;
  }
`;

const LayerName = styled.span`
  ${mono};
  flex: 1;
  display: flex;
  align-items: center;
  justify-content: space-between;
  height: 14px;
  padding: 0 2px 0 1px;
  background: ${({ $color }) => $color};
  font-size: 12px;
  line-height: 14px;
`;

const Selected = styled.div`
  ${mono};
  height: 19px;
  padding-left: 3px;
  background: ${amber};
  border: 1px solid #000;
  font-size: 12px;
  line-height: 17px;
`;

const Canvas = styled.main`
  flex: 1;
  min-width: 0;
  background: #000;
`;

const BoardArt = styled.svg`
  display: block;
`;

const ToolColumn = styled.div`
  flex: 0 0 72px;
  overflow: hidden;
`;

const ToolGrid = styled.div`
  width: 80px;
  display: grid;
  grid-template-columns: 38px 38px;
  gap: 2px;
  padding-top: 3px;
  padding-bottom: 3px;
  border-bottom: 2px solid #4f7f78;

  button:nth-child(9),
  button:nth-child(10) {
    margin-top: 4px;
  }
`;

const ToolButton = styled.button`
  height: 38px;
  background: ${({ $tone }) => $tone || aqua};
  border: ${({ $hot }) => ($hot ? '2px solid #e01818' : 'none')};
  box-shadow: inset 2px 2px rgba(255, 255, 255, 0.7), inset -2px -2px rgba(0, 0, 0, 0.4);

  svg {
    display: block;
    margin: ${({ $hot }) => ($hot ? '-2px' : '0')};
  }
`;

const Coords = styled.div`
  ${mono};
  position: absolute;
  right: 0;
  bottom: 1px;
  width: 156px;
  height: 46px;
  padding: 8px 2px 0;
  background: ${mint};
  border: 2px solid #a8f0de;
  border-left-color: #2f7565;
  border-right: none;
  font-size: 15px;
  line-height: 15px;
  white-space: pre;
`;

const CommandBar = styled.div`
  ${mono};
  height: 33px;
  display: flex;
  gap: 1px;
  padding: 0 0 0 1px;
  font-size: 12px;
`;

const CommandButton = styled.button`
  width: 31px;
  display: flex;
  align-items: center;
  justify-content: center;
  background: ${cream};
  border: 3px solid ${({ $mint }) => ($mint ? '#5fb8a2' : '#fffbe0')};
  box-shadow: inset 1px 1px #fff, inset -2px -2px #b5b08c;
`;

const XyLabel = styled.label`
  width: 47px;
  line-height: 33px;
  padding-left: 1px;
  background: ${cream};
  font-family: 'Liberation Serif', serif;
  font-size: 14px;
`;

const XyInput = styled.input`
  width: 171px;
  padding-left: 6px;
  background: ${cream};
  border: 3px solid;
  border-color: #9b9678 #d5d0a8 #c5c098 #9b9678;
`;

const Prompt = styled.div`
  flex: 1;
  line-height: 34px;
  padding-left: 2px;
  background: ${cream};
  white-space: pre;
`;

const Units = styled.div`
  ${raised};
  flex: 0 0 71px;
  display: flex;
  align-items: center;
  padding-left: 10px;
  background: ${mint};
  font-size: 15px;

  select {
    width: 44px;
    appearance: none;
    background: none;
    border: none;
  }

  i {
    width: 13px;
    height: 7px;
    background: #7fe0c8;
    border: 1px solid;
    border-color: #c9f5ee #2f7565 #2f7565 #c9f5ee;
  }
`;

const BottomStrip = styled.div`
  height: 13px;
  background: #b8ffff;
  border-top: 3px solid #5c8e8e;
  box-shadow: inset 0 1px #000;
`;

const PptWindow = styled.section`
  position: absolute;
  left: 697px;
  right: 65px;
  top: 44px;
  bottom: 78px;
  display: flex;
  flex-direction: column;
  background: #bfdbff;
  border-right: 1px solid #fff;
  border-bottom: 2px solid #e8f0fb;
  box-shadow: 0 2px 14px rgba(0, 0, 0, 0.5);
  color: ${navy};
  font-size: 15px;
`;

const PptTop = styled.div`
  height: 63px;
  display: flex;
  gap: 1px;
  padding-left: 6px;
  background: linear-gradient(#fff 34px, #bfdbff 34px);
`;

const OfficeButton = styled.button`
  width: 46px;
  height: 46px;
  margin-top: 9px;
  border-radius: 50%;
  background: linear-gradient(#fdfdfe, #c5d3ea 50%, #f2f6fc);
  border: 1px solid #8195b8;
  box-shadow: 0 1px 3px rgba(40, 60, 110, 0.6);

  svg {
    display: block;
    margin: -1px;
  }
`;

const TopRight = styled.div`
  flex: 1;
  display: flex;
  flex-direction: column;
`;

const TitleRow = styled.div`
  height: 34px;
  display: flex;
  align-items: center;
`;

const QuickAccess = styled.div`
  width: 107px;
  height: 26px;
  display: flex;
  align-items: center;
  gap: 8px;
  padding-left: 14px;
  margin-right: 9px;
  border: 1px solid #b5b9c0;
  border-left-color: transparent;
  border-radius: 0 13px 13px 0;

  button,
  svg {
    display: block;
  }
`;

const ContextTitle = styled.div`
  width: 74px;
  height: 30px;
  margin: 4px 11px 0 437px;
  line-height: 27px;
  text-align: center;
  color: #222;
  background: linear-gradient(#fff, #f7d9d9 60%, #eeb0ae);
  border-bottom: 1px solid #d84a40;
  white-space: nowrap;
`;

const DocTitle = styled.div`
  flex: 1;
  color: #111;
  font-size: 16px;
  line-height: 34px;
  height: 34px;
  white-space: nowrap;
`;

const TabRow = styled.div`
  flex: 1;
  display: flex;
  align-items: center;
  padding-left: 9px;
`;

const tabBase = css`
  height: 27px;
  padding: 0 15px;
  line-height: 26px;
  white-space: nowrap;
`;

const Tab = styled.button`
  ${tabBase};
  font-size: ${({ $latin }) => ($latin ? '16px' : '15px')};
  ${({ $active }) =>
    $active &&
    css`
      padding: 0 10px;
      margin-right: 4px;
      background: linear-gradient(#f3f8fe, #dde9f7);
      border: 1px solid #93b5e6;
      border-bottom: none;
      border-radius: 4px 4px 0 0;
    `}
`;

const ContextTab = styled.button`
  ${tabBase};
  width: 74px;
  margin-left: 3px;
  padding: 0;
  border-left: 1px solid #a9c2e4;
  border-right: 1px solid #a9c2e4;
`;

const HelpButton = styled.button`
  width: 14px;
  height: 14px;
  margin: 0 6px 0 auto;
  border-radius: 50%;
  background: #2f64d0;
  box-shadow: 0 0 0 1px #cfe0f8, 0 0 0 2px #5577b8;
  color: #fff;
  font-size: 11px;
  font-weight: 700;
  line-height: 14px;
`;

const RibbonBar = styled.div`
  height: 122px;
  display: flex;
  gap: 3px;
  margin: 0 2px 0 1px;
  padding: 2px 4px 2px 3px;
  background: linear-gradient(#dbe7f5, #c9daee 22%, #d4e5f5 70%, #e0f4fc);
  border: 1px solid #8db2e3;
  border-radius: 3px;
  box-shadow: 0 1px 2px rgba(60, 90, 150, 0.5);
`;

const GroupBox = styled.div`
  flex: 0 0 ${({ $width }) => $width}px;
  display: flex;
  flex-direction: column;
  background: linear-gradient(#dde7f3, #c9d9ed 22%, #d9e6f5);
  border: 1px solid #9fbfe3;
  border-radius: 3px;
  overflow: hidden;
`;

const GroupBody = styled.div`
  flex: 1;
  display: flex;
  padding: 0 3px;
`;

const GroupLabel = styled.div`
  height: 23px;
  display: flex;
  align-items: center;
  padding-right: 4px;
  background: #c1d8f1;
  color: #3e6aaa;

  span {
    flex: 1;
    text-align: center;
  }
`;

const LaunchButton = styled.button`
  width: 12px;
  height: 12px;

  svg {
    display: block;
  }
`;

const BigButton = styled.button`
  width: ${({ $width }) => $width}px;
  display: flex;
  flex-direction: column;
  align-items: center;
  padding-top: 7px;
  line-height: 20px;
  white-space: nowrap;

  > svg:first-child {
    margin-bottom: 8px;
  }

  > svg:last-child {
    margin-top: 8px;
  }

  span svg {
    vertical-align: middle;
  }
`;

const Stack = styled.div`
  display: flex;
  flex-direction: column;
  padding-left: 4px;
`;

const SmallButton = styled.button`
  height: 26px;
  display: flex;
  align-items: center;
  gap: 4px;
  white-space: nowrap;
`;

const Rows = styled.div`
  display: flex;
  flex-direction: column;
  gap: 12px;
  padding-top: 12px;
`;

const ToolRow = styled.div`
  height: ${({ $height }) => $height}px;
  display: flex;
  align-items: center;
  gap: 3px;
`;

const Combos = styled.div`
  display: flex;
`;

const Combo = styled.div`
  width: ${({ $width }) => $width}px;
  height: 29px;
  display: flex;
  align-items: center;
  padding-right: 5px;
  background: #ececec;
  border: 1px solid #b3c7e1;

  select {
    flex: 1;
    appearance: none;
    background: none;
    border: none;
  }
`;

const ButtonSet = styled.div`
  display: flex;
  height: 25px;
  border: 1px solid #8fadd6;
  border-radius: 3px;
`;

const FontButton = styled.button`
  width: ${({ $width }) => $width}px;
  display: flex;
  align-items: center;
  justify-content: center;
  gap: 2px;
  background: linear-gradient(#d3e0f1, #bccfe9 50%, #cddcf0);
  border-right: 1px solid #aac1e0;
  color: #7083a5;
  font-family: 'Liberation Serif', serif;
  font-size: ${({ $size = 15 }) => $size}px;

  &:last-child {
    border-right: none;
  }

  sup {
    align-self: flex-start;
    font-size: 9px;
    line-height: 12px;
  }
`;

const Gallery = styled.div`
  height: 77px;
  display: flex;
  margin: 4px 0 0 1px;
  border: 1px solid #b0cbea;
`;

const Shapes = styled.div`
  display: grid;
  grid-template-columns: repeat(6, 24px);
  grid-auto-rows: 24px;
  padding-top: 1px;
  background: #d6e5f6;
`;

const ShapeButton = styled.button`
  display: flex;
  align-items: center;
  justify-content: center;
`;

const GalleryScroll = styled.div`
  width: 19px;
  display: flex;
  flex-direction: column;

  button {
    flex: 1;
    display: flex;
    align-items: center;
    justify-content: center;
    background: linear-gradient(#e6effa, #c6d9f0);
    border: 1px solid #b0cbea;
  }
`;

const Stage = styled.div`
  flex: 1;
  min-height: 0;
  display: flex;
  justify-content: space-between;
  padding-left: 23px;
  background: linear-gradient(#a5c2eb, #7c9fd6 50%, #658dcb);
`;

const Slide = styled.article`
  position: relative;
  flex: 1;
  margin: 27px 16px 26px 0;
  background: #fff;
  box-shadow: 3px 4px 7px rgba(20, 40, 90, 0.6);
  color: #000;
`;

const SlideHeader = styled.h2`
  height: 65px;
  margin: 0 0 22px;
  padding-left: 77px;
  background: #339966;
  font-weight: 400;
  font-size: 31px;
  line-height: 62px;
`;

const SlideLead = styled.p`
  margin: 0 0 6px 52px;
  font-size: 27px;
  line-height: 44px;
`;

const Sheet = styled.table`
  width: 919px;
  margin-left: 21px;
  table-layout: fixed;
  border-collapse: collapse;
  font-size: 12px;
  line-height: 17px;
  color: #222;

  th,
  td {
    padding: 0;
    border: 1px solid #333;
    text-align: center;
    font-weight: 400;
    white-space: pre;
  }

  th {
    padding-bottom: 1px;
  }
`;

const Line = styled.tr`
  height: ${({ $height }) => $height}px;
`;

const HeadCell = styled.th`
  && {
    background: #92d050;
    color: #f01800;
    font-size: 18px;
  }
`;

const TextCell = styled.td`
  && {
    padding-left: 1px;
    padding-bottom: ${({ $raised }) => ($raised ? '4px' : '0')};
    padding-bottom: ${({ $shifted }) => $shifted && '16px'};
    text-align: left;
  }
`;

const Red = styled.span`
  color: #ee1c25;
`;

const Blank = styled.span`
  display: inline-block;
  width: 92px;
`;

const NoteFrame = styled.div`
  position: absolute;
  left: 970px;
  top: 269px;
  width: 233px;
  height: 308px;
  padding: 2px 3px;
  border: 1px solid #4a6f90;
`;

const Note = styled.div`
  height: 100%;
  padding-top: 2px;
  border: 1px solid #111;
  font-family: 'Liberation Mono', 'Noto Sans CJK SC', monospace;
  font-size: 12px;
  line-height: 17px;
  white-space: pre;
`;

const NoteBlock = styled.div`
  padding-left: 1px;
  color: ${({ $color }) => $color};
  ${({ $ruled }) =>
    $ruled &&
    css`
      margin-top: 7px;
      padding-top: 11px;
      border-top: 1px solid #111;
    `}
`;

const Handle = styled.span`
  position: absolute;
  left: ${({ $x }) => $x};
  top: ${({ $y }) => $y};
  width: 9px;
  height: 9px;
  margin: -5px;
  background: linear-gradient(#fff, #c3e4ee);
  border: 1px solid #5c7a94;
  border-radius: ${({ $round }) => ($round ? '50%' : '0')};
`;

const RotateHandle = styled.span`
  position: absolute;
  left: 50%;
  top: -30px;
  height: 30px;
  border-left: 1px solid #7d99b8;

  &::before {
    content: '';
    position: absolute;
    left: -6px;
    top: 0;
    width: 10px;
    height: 10px;
    border-radius: 50%;
    background: #8be04a;
    border: 1px solid #4b8a2c;
  }
`;

const Highlight = styled.div`
  position: absolute;
  left: 944px;
  top: 429px;
  width: 258px;
  height: 103px;
  border: 4px solid #fdf51e;
  box-shadow: 2px 3px 4px rgba(0, 0, 0, 0.5), inset 2px 3px 4px rgba(0, 0, 0, 0.5);
`;

const ScrollColumn = styled.div`
  width: 16px;
  display: flex;
  flex-direction: column;
  background: #a8c6ee;
`;

const ScrollTrack = styled.div`
  flex: 1;
  display: flex;
  flex-direction: column;
  align-items: center;
  justify-content: space-between;
  padding: 2px 0;
  background: #7c9bcb;

  button {
    color: #3d5684;
    font-size: 9px;
    line-height: 14px;
  }
`;

const ScrollThumb = styled.div`
  width: 14px;
  height: 9px;
  margin: 92px 0 auto;
  background: linear-gradient(#fff, #c5d8f0);
  border: 1px solid #6d8cbc;
`;

const PageButton = styled.button`
  height: 16px;
  display: flex;
  align-items: flex-end;
  justify-content: center;

  &:last-child {
    height: 32px;
    align-items: flex-start;
    padding-top: 6px;
  }
`;

const StatusBar = styled.footer`
  height: 32px;
  display: flex;
  padding-top: 6px;
  background: linear-gradient(#b5d4fb 5px, #5f86bd 5px, #dce9fa 7px, #c1d8f5 18px, #a5c4ee);
  line-height: 27px;
  color: #16386e;
`;

const StatusItem = styled.div`
  width: ${({ $width }) => $width}px;
  text-align: center;
  border-right: 1px solid #8eb0de;
  box-shadow: 1px 0 #e4effc;
  white-space: nowrap;
`;

const StatusRight = styled.div`
  width: 358px;
  margin-left: auto;
  display: flex;
  align-items: center;
  padding-left: 5px;
  border-left: 2px solid #7898c8;
  background: linear-gradient(#b4cff3, #93b3e0 50%, #7397d0);
`;

const ViewSet = styled.div`
  display: flex;
  border: 1px solid #6c8dc0;
`;

const ViewButton = styled.button`
  width: 23px;
  height: 22px;
  display: flex;
  align-items: center;
  justify-content: center;
  background: ${({ $active }) => ($active ? 'linear-gradient(#ffe3a8, #f9b84b)' : '#bcd3f2')};
`;

const ZoomText = styled.span`
  width: 58px;
  padding-left: 10px;
`;

const RoundButton = styled.button`
  width: 21px;
  height: 21px;
  display: flex;
  align-items: center;
  justify-content: center;
  border-radius: 50%;
  background: linear-gradient(#fff, #cfdcef);
  border: 1px solid #56719c;
`;

const ZoomRange = styled.input`
  appearance: none;
  width: 126px;
  height: 20px;
  background: linear-gradient(transparent 9px, #dbe8fa 9px, #5a7cae 11px, transparent 11px);

  &::-webkit-slider-thumb {
    appearance: none;
    width: 10px;
    height: 16px;
    background: #e7effa;
    border: 2px solid #56719c;
    border-radius: 1px 1px 5px 5px;
  }
`;

const FitButton = styled.button`
  width: 20px;
  height: 20px;
  margin: 0 8px 0 9px;
  padding: 1px;
  background: #e9eff8;
  border-radius: 3px;

  svg {
    display: block;
  }
`;
